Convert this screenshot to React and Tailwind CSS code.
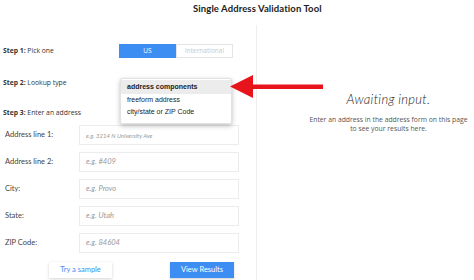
export default function App() {
  const fields = [
    { label: 'Address line 1:', ph: 'e.g. 3214 N University Ave', small: true },
    { label: 'Address line 2:', ph: 'e.g. #409' },
    { label: 'City:', ph: 'e.g. Provo' },
    { label: 'State:', ph: 'e.g. Utah' },
    { label: 'ZIP Code:', ph: 'e.g. 84604' },
  ];

  return (
    <div
      className="relative w-[474px] h-[280px] overflow-hidden bg-white text-[#333]"
      style={{ fontFamily: '"Open Sans", "Noto Sans", sans-serif' }}
    >
      {/* Title */}
      <div className="h-[25px] pl-[193px] pt-[2px] text-[9.5px] font-bold text-[#222] tracking-[0.1px]" style={{ fontFamily: 'Lato, sans-serif' }}>
        Single Address Validation Tool
      </div>

      <div className="flex">
        {/* Left form column */}
        <div className="w-[256px] shrink-0">
          {/* Step 1 */}
          <div className="mt-[19px] flex h-[14px] items-center">
            <div className="w-[119px] pl-[3px] text-[6.8px]">
              <span className="font-bold">Step 1:</span> Pick one
            </div>
            <div className="flex h-[14px] w-[114px] text-[6.5px]">
              <div className="flex w-[57px] items-center justify-center bg-[#3d8ef3] text-white">US</div>
              <div className="flex w-[57px] items-center justify-center border border-[#e4e4e4] text-[#c8c8c8]">International</div>
            </div>
          </div>

          {/* Step 2 */}
          <div className="relative mt-[18px] flex h-[14px] items-center">
            <div className="pl-[3px] text-[6.8px]">
              <span className="font-bold">Step 2:</span> Lookup type
            </div>
            <div
              className="absolute left-[120px] top-[2px] w-[112px] rounded-[2px] border border-[#e2e2e2] bg-white py-[1px] text-[7px] text-[#222] shadow-[0_2px_5px_rgba(0,0,0,0.25)]"
              style={{ fontFamily: '"Liberation Sans", Arial, sans-serif' }}
            >
              <div className="flex h-[14px] items-center bg-[#ececec] pl-[6px] font-bold">address components</div>
              <div className="flex h-[12px] items-center pl-[6px]">freeform address</div>
              <div className="flex h-[12px] items-center pl-[6px]">city/state or ZIP Code</div>
              <div className="h-[4px]" />
            </div>
          </div>

          {/* Step 3 */}
          <div className="mt-[16px] flex h-[14px] items-center pl-[3px] text-[6.8px]">
            <span className="font-bold">Step 3:</span>&nbsp;Enter an address
          </div>

          {/* Fields */}
          <div className="mt-[5px] flex flex-col gap-[7px]" style={{ fontFamily: 'Lato, sans-serif' }}>
            {fields.map((f) => (
              <div key={f.label} className="flex h-[20px] items-center">
                <div className="w-[79px] pl-[5px] text-[7.5px] text-[#444]">{f.label}</div>
                <div className="flex h-[20px] w-[160px] items-center border border-[#ececec] pl-[6px]">
                  <span className={`italic text-[#999] ${f.small ? 'text-[6px]' : 'text-[7.5px]'}`}>{f.ph}</span>
                </div>
              </div>
            ))}
          </div>

          {/* Buttons */}
          <div className="mt-[9px] flex h-[16px] text-[7.5px]" style={{ fontFamily: 'Lato, sans-serif' }}>
            <button className="ml-[49px] flex h-[16px] w-[63px] items-center justify-center bg-white text-[#3d8ef3] shadow-[0_1px_3px_rgba(0,0,0,0.18)]">
              Try a sample
            </button>
            <button className="ml-[58px] flex h-[16px] w-[64px] items-center justify-center bg-[#3d8ef3] text-white shadow-[0_1px_2px_rgba(0,0,0,0.2)]">
              View Results
            </button>
          </div>
        </div>

        {/* Right results column */}
        <div className="flex h-[255px] flex-1 flex-col items-center border-l border-[#eeeeee] pl-[46px] pt-[65px]">
          <div className="text-[13px] italic font-light text-[#222] tracking-[0.3px]" style={{ fontFamily: 'Lato, sans-serif' }}>
            Awaiting input.
          </div>
          <div className="mt-[5px] text-center text-[6.8px] leading-[9px] text-[#555]">
            Enter an address in the address form on this page
            <br />
            to see your results here.
          </div>
        </div>
      </div>

      {/* Annotation arrow */}
      <svg className="absolute left-[229px] top-[74px]" width="96" height="26" viewBox="0 0 96 26">
        <rect x="20" y="10.5" width="74" height="4.5" fill="#e8141c" />
        <polygon points="1,12.5 24,1 24,24" fill="#e8141c" />
      </svg>
    </div>
  );
}
